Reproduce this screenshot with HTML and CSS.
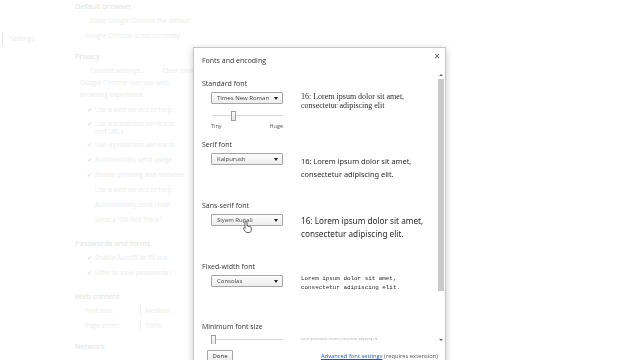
FILE: index.html
```html
<!DOCTYPE html>
<html lang="en">
<head>
  <meta charset="UTF-8">
  <title>Settings - Fonts and encoding</title>
  <link rel="stylesheet" href="styles.css">
</head>
<body>
  <div class="page">
    <nav class="nav">
      <div class="nav-item">Settings</div>
    </nav>

    <!-- only the part left of the dialog is visible -->
    <main class="main">
      <div class="sec-title first">Default browser</div>
      <div class="line indent-btn">Make Google Chrome the default</div>
      <div class="line indent-sm">Google Chrome is not currently</div>

      <div class="sec-title">Privacy</div>
      <div class="line indent-btn buttons">
        <span>Content settings...</span>
        <span>Clear brow</span>
      </div>
      <div class="line indent-xs tight">Google Chrome may use web</div>
      <div class="line indent-xs tight">browsing experience.</div>
      <div class="check"><span class="tick">&#10004;</span>Use a web service to help</div>
      <div class="check two"><span class="tick">&#10004;</span><span>Use a prediction service to<br>and URLs</span></div>
      <div class="check"><span class="tick">&#10004;</span>Use a prediction service to</div>
      <div class="check"><span class="tick">&#10004;</span>Automatically send usage</div>
      <div class="check"><span class="tick">&#10004;</span>Enable phishing and malware</div>
      <div class="line sub">Use a web service to help</div>
      <div class="line sub">Automatically send crash</div>
      <div class="line sub">Send a "Do Not Track"</div>

      <div class="sec-title gap">Passwords and forms</div>
      <div class="check"><span class="tick">&#10004;</span>Enable Autofill to fill out</div>
      <div class="check"><span class="tick">&#10004;</span>Offer to save passwords I</div>

      <div class="sec-title gap">Web content</div>
      <div class="line field"><span class="field-label">Font size:</span><span class="field-select">Medium</span></div>
      <div class="line field"><span class="field-label">Page zoom:</span><span class="field-select">100%</span></div>

      <div class="sec-title">Network</div>
    </main>
  </div>

  <div class="dialog">
    <div class="dialog-head">
      <span class="dialog-title">Fonts and encoding</span>
      <span class="close">&times;</span>
    </div>

    <div class="dialog-body">
      <div class="content">
        <section class="font-sec">
          <div class="font-label">Standard font</div>
          <div class="font-row">
            <div class="controls">
              <div class="select">Times New Roman<span class="caret"></span></div>
              <div class="slider slider-std">
                <div class="track"></div>
                <div class="thumb thumb-std"></div>
              </div>
              <div class="slider-labels"><span>Tiny</span><span>Huge</span></div>
            </div>
            <div class="sample sample-std">16: Lorem ipsum dolor sit amet,<br>consectetur adipiscing elit</div>
          </div>
        </section>

        <section class="font-sec">
          <div class="font-label">Serif font</div>
          <div class="font-row">
            <div class="controls">
              <div class="select">Kalpurush<span class="caret"></span></div>
            </div>
            <div class="sample sample-serif">16: Lorem ipsum dolor sit amet,<br>consectetur adipiscing elit.</div>
          </div>
        </section>

        <section class="font-sec">
          <div class="font-label">Sans-serif font</div>
          <div class="font-row">
            <div class="controls">
              <div class="select">Siyam Rupali<span class="caret"></span></div>
            </div>
            <div class="sample sample-sans">16: Lorem ipsum dolor sit amet,<br>consectetur adipiscing elit.</div>
          </div>
        </section>

        <section class="font-sec short">
          <div class="font-label">Fixed-width font</div>
          <div class="font-row">
            <div class="controls">
              <div class="select">Consolas<span class="caret"></span></div>
            </div>
            <div class="sample sample-mono">Lorem ipsum dolor sit amet,<br>consectetur adipiscing elit.</div>
          </div>
        </section>

        <section class="font-sec">
          <div class="font-label">Minimum font size</div>
          <div class="font-row">
            <div class="controls">
              <div class="slider">
                <div class="track"></div>
                <div class="thumb thumb-min"></div>
              </div>
            </div>
            <div class="sample sample-min">Lorem ipsum dolor sit amet, consectetur adipiscing elit.</div>
          </div>
        </section>
      </div>

      <div class="scrollbar">
        <span class="arrow up"></span>
        <div class="scroll-thumb"></div>
        <span class="arrow down"></span>
      </div>
    </div>

    <div class="dialog-foot">
      <button class="done">Done</button>
      <span class="foot-note"><a href="#" class="link">Advanced font settings</a> (requires extension)</span>
    </div>
  </div>

  <svg class="cursor" width="9" height="12" viewBox="0 0 9 12">
    <path d="M3 0.5 C3.8 0.5 4 1 4 1.6 V5 L4.6 4.8 C5.1 4.8 5.4 5 5.5 5.4 L6 5.3 C6.5 5.3 6.8 5.6 6.9 6 L7.3 5.9 C7.9 5.9 8.3 6.3 8.3 7 V9 C8.3 10.3 7.5 11.5 6 11.5 H4 C3.2 11.5 2.6 11 2.1 10.3 L0.6 7.8 C0.3 7.3 0.6 6.8 1.1 6.8 C1.5 6.8 1.8 7 2 7.4 V1.6 C2 1 2.3 0.5 3 0.5 Z" fill="#fff" stroke="#222" stroke-width="0.7"/>
  </svg>
</body>
</html>
```

FILE: styles.css
```css
* {
  margin: 0;
  padding: 0;
  box-sizing: border-box;
}

body {
  font-family: "Open Sans", "Noto Sans", sans-serif;
  background-color: #ffffff;
  color: #333;
  width: 640px;
  height: 360px;
  overflow: hidden;
  position: relative;
}

/* Faded settings page behind the dialog */
.page {
  display: flex;
  color: #ececec;
  font-size: 6.5px;
}

.nav {
  width: 75px;
  padding-top: 32px;
}

.nav-item {
  margin-left: 2px;
  border-left: 1px solid #e6e6e6;
  padding-left: 7px;
  height: 13px;
  line-height: 13px;
}

.main {
  width: 118px;
  white-space: nowrap;
}

.sec-title {
  font-size: 7.5px;
  color: #e2e2e2;
  line-height: 12px;
  margin-top: 8px;
}

.sec-title.first {
  margin-top: 0;
}

.sec-title.gap {
  margin-top: 11px;
}

.line {
  line-height: 12px;
  margin-top: 3px;
}

.line.tight {
  margin-top: 0;
}

.indent-btn {
  padding-left: 15px;
}

.indent-sm {
  padding-left: 10px;
}

.indent-xs {
  padding-left: 5px;
}

.buttons {
  display: flex;
  gap: 18px;
}

.check {
  display: flex;
  padding-left: 12px;
  line-height: 12px;
  margin-top: 3px;
}

.check.two {
  line-height: 8px;
  margin-top: 4px;
}

.tick {
  flex: none;
  width: 8px;
  color: #e0e0e0;
  font-size: 6px;
}

.sub {
  padding-left: 20px;
}

.field {
  display: flex;
  padding-left: 10px;
}

.field-label {
  width: 55px;
}

.field-select {
  border-left: 1px solid #f0f0f0;
  padding-left: 4px;
}

/* Dialog */
.dialog {
  position: absolute;
  left: 193px;
  top: 47px;
  width: 253px;
  height: 322px;
  background: #ffffff;
  border: 1px solid #c6c6c6;
  box-shadow: 0 2px 7px rgba(0, 0, 0, 0.22);
  display: flex;
  flex-direction: column;
  will-change: transform;
}

.dialog-head {
  height: 24px;
  display: flex;
  align-items: center;
  justify-content: space-between;
  padding: 0 5px 0 8px;
}

.dialog-title {
  font-size: 7px;
  color: #333;
}

.close {
  align-self: flex-start;
  margin-top: 3px;
  font-size: 10px;
  line-height: 10px;
  color: #555;
}

.dialog-body {
  height: 272px;
  display: flex;
  overflow: hidden;
}

.content {
  flex: 1;
  padding: 7px 0 0 8px;
  overflow: hidden;
}

.font-sec {
  height: 61px;
}

.font-sec.short {
  height: 60px;
}

.font-label {
  font-size: 7px;
  line-height: 10px;
  color: #333;
}

.font-row {
  display: flex;
  margin-top: 3px;
}

.controls {
  width: 99px;
  padding-left: 9px;
}

.select {
  width: 72px;
  height: 12px;
  border: 1px solid #a6a6a6;
  border-radius: 1px;
  background: linear-gradient(#fdfdfd, #ececec);
  font-size: 6px;
  line-height: 10px;
  color: #444;
  padding-left: 5px;
  position: relative;
}

.caret {
  position: absolute;
  right: 4px;
  top: 4px;
  border-left: 2.5px solid transparent;
  border-right: 2.5px solid transparent;
  border-top: 3px solid #222;
}

.slider {
  position: relative;
  width: 72px;
  height: 10px;
}

.slider-std {
  margin-top: 7px;
}

.track {
  position: absolute;
  left: 1px;
  right: 0;
  top: 4px;
  height: 1px;
  background: #d8d8d8;
}

.thumb {
  position: absolute;
  top: 0;
  width: 5px;
  height: 10px;
  border: 1px solid #a0a0a0;
  background: linear-gradient(#fafafa, #e6e6e6);
}

.thumb-std {
  left: 20px;
}

.thumb-min {
  left: 0;
}

.slider-labels {
  width: 72px;
  display: flex;
  justify-content: space-between;
  font-size: 5.5px;
  line-height: 8px;
  margin-top: 1px;
  color: #555;
}

.sample {
  color: #2a2a2a;
  white-space: nowrap;
}

.sample-std {
  font-family: "Liberation Serif", serif;
  font-size: 8px;
  line-height: 9px;
}

.sample-serif {
  font-family: "Noto Sans", sans-serif;
  font-size: 7.4px;
  line-height: 13px;
  margin-top: 2px;
}

.sample-sans {
  font-family: "Noto Sans", sans-serif;
  font-size: 8.2px;
  line-height: 13px;
}

.sample-mono {
  font-family: "Liberation Mono", monospace;
  font-size: 5.9px;
  line-height: 9px;
  margin-top: -1px;
}

.sample-min {
  font-size: 3px;
  line-height: 6px;
  color: #aaa;
  margin-top: 1px;
}

.scrollbar {
  width: 8px;
  display: flex;
  flex-direction: column;
  align-items: center;
  padding: 2px 0 3px;
}

.arrow {
  display: block;
  border-left: 2px solid transparent;
  border-right: 2px solid transparent;
}

.arrow.up {
  border-bottom: 2px solid #666;
}

.arrow.down {
  border-top: 2px solid #666;
  margin-top: auto;
}

.scroll-thumb {
  width: 6px;
  height: 212px;
  margin-top: 3px;
  background: #c9c9c9;
}

.dialog-foot {
  display: flex;
  align-items: center;
  justify-content: space-between;
  padding: 6px 7px 0 13px;
}

.done {
  font-family: "Open Sans", sans-serif;
  font-size: 6px;
  width: 26px;
  height: 12px;
  color: #333;
  border: 1px solid #a6a6a6;
  border-radius: 1px;
  background: linear-gradient(#fdfdfd, #ececec);
}

.foot-note {
  font-size: 5.8px;
  color: #555;
}

.link {
  color: #1a55c4;
}

.cursor {
  position: absolute;
  left: 243px;
  top: 221px;
}
```
